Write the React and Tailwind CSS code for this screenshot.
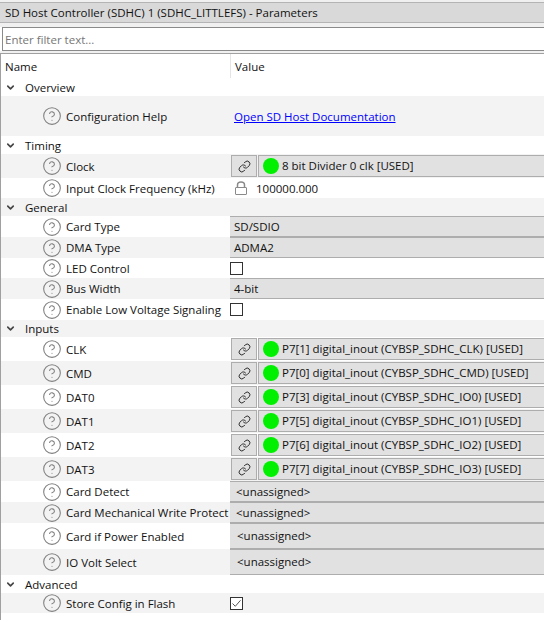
import React from "react";
import { ChevronDown, CircleHelp, Link } from "lucide-react";

const font = "font-['Open_Sans','Noto_Sans',sans-serif]";

function Lock() {
  return (
    <svg width="14" height="15" viewBox="0 0 14 15" fill="none" stroke="#8a8a8a" strokeWidth="1" className="shrink-0">
      <rect x="1.5" y="6.5" width="11" height="7" rx="0.5" />
      <path d="M3.5 6.5V4a3.5 3 0 0 1 7 0v2.5" strokeWidth="1.5" />
    </svg>
  );
}

function Check({ checked }) {
  return (
    <div className="flex h-[13px] w-[13px] items-center justify-center border border-[#333] bg-white">
      {checked && (
        <svg width="11" height="11" viewBox="0 0 11 11" fill="none" stroke="#555" strokeWidth="1">
          <path d="M1.5 5.5l2.8 2.8 5.2-6" />
        </svg>
      )}
    </div>
  );
}

function Group({ title, h, shade }) {
  return (
    <div className={`flex items-center pl-[4px] text-[11.5px] text-[#111] ${shade ? "bg-[#f3f3f3]" : "bg-white"} ${h}`}>
      <ChevronDown size={11} strokeWidth={3.5} className="text-[#444]" />
      <span className="ml-[9px] pt-[1px]">{title}</span>
    </div>
  );
}

function Row({ name, h, shade, children }) {
  return (
    <div className={`flex items-center ${shade ? "bg-[#f3f3f3]" : "bg-white"} ${h}`}>
      <div className="flex w-[229px] shrink-0 items-center pl-[41px]">
        <CircleHelp size={20} strokeWidth={1.3} className="shrink-0 text-[#808080]" />
        <span className="ml-[4px] whitespace-nowrap pt-[1px] text-[11.5px] text-[#111]">{name}</span>
      </div>
      <div className="flex h-full min-w-0 flex-1 items-center">{children}</div>
    </div>
  );
}

function Combo({ text, pad = "pl-[4px]" }) {
  return (
    <div className={`flex h-full flex-1 items-center whitespace-nowrap border-y border-[#adadad] bg-[#e1e1e1] text-[11.5px] text-[#111] ${pad}`}>
      {text}
    </div>
  );
}

function Pin({ text }) {
  return (
    <div className="flex h-full flex-1 items-stretch py-[1px] pl-[1px]">
      <div className="flex w-[26px] shrink-0 items-center justify-center border border-[#adadad] bg-[#e1e1e1]">
        <Link size={13} strokeWidth={1.6} className="text-[#111]" />
      </div>
      <div className="ml-[1px] flex flex-1 items-center whitespace-nowrap border-y border-l border-[#adadad] bg-[#e1e1e1] text-[11.5px] text-[#111]">
        <span className="ml-[4px] mr-[3px] h-[16px] w-[16px] shrink-0 rounded-full bg-[#00f000]" />
        <span>{text}</span>
      </div>
    </div>
  );
}

export default function App() {
  return (
    <div className={`h-[621px] w-[544px] overflow-hidden bg-white ${font}`}>
      <div className="h-[2px] bg-[#f0f0f0]" />
      <div className="flex h-[21px] items-center border-y border-[#b4b4b4] bg-[#d9d9d9] pl-[5px] text-[11.5px] text-[#111]">
        SD Host Controller (SDHC) 1 (SDHC_LITTLEFS) - Parameters
      </div>
      <div className="h-[4px] bg-[#f0f0f0]" />
      <div className="ml-[2px] flex h-[24px] items-center border border-r-0 border-[#8a8a8a] bg-white pl-[2px] pt-[2px] text-[11.5px] text-[#767676]">
        Enter filter text...
      </div>
      <div className="h-[2px] bg-[#f0f0f0]" />
      <div className="h-[567px] border-l border-t border-[#a0a0a0]">
        <div className="flex h-[24px] items-center text-[11.5px] text-[#111]">
          <span className="w-[229px] pl-[4px] pt-[2px]">Name</span>
          <span className="flex h-full items-center border-l border-[#e5e5e5] pl-[4px] pt-[2px]">Value</span>
        </div>
        <Group title="Overview" h="h-[18px]" />
        <Row name="Configuration Help" h="h-[40px]" shade>
          <span className="ml-[4px] pt-[1px] text-[11.5px] text-[#0000ff] underline">Open SD Host Documentation</span>
        </Row>
        <Group title="Timing" h="h-[18px]" />
        <Row name="Clock" h="h-[24px]" shade>
          <Pin text="8 bit Divider 0 clk [USED]" />
        </Row>
        <Row name="Input Clock Frequency (kHz)" h="h-[20px]">
          <span className="ml-[4px]"><Lock /></span>
          <span className="ml-[8px] pt-[1px] text-[11.5px] text-[#111]">100000.000</span>
        </Row>
        <Group title="General" h="h-[18px]" shade />
        <Row name="Card Type" h="h-[21px]"><Combo text="SD/SDIO" /></Row>
        <Row name="DMA Type" h="h-[21px]" shade><Combo text="ADMA2" /></Row>
        <Row name="LED Control" h="h-[20px]"><Check /></Row>
        <Row name="Bus Width" h="h-[21px]" shade><Combo text="4-bit" /></Row>
        <Row name="Enable Low Voltage Signaling" h="h-[21px]"><Check /></Row>
        <Group title="Inputs" h="h-[17px]" shade />
        <Row name="CLK" h="h-[24px]"><Pin text="P7[1] digital_inout (CYBSP_SDHC_CLK) [USED]" /></Row>
        <Row name="CMD" h="h-[24px]" shade><Pin text="P7[0] digital_inout (CYBSP_SDHC_CMD) [USED]" /></Row>
        <Row name="DAT0" h="h-[24px]"><Pin text="P7[3] digital_inout (CYBSP_SDHC_IO0) [USED]" /></Row>
        <Row name="DAT1" h="h-[24px]" shade><Pin text="P7[5] digital_inout (CYBSP_SDHC_IO1) [USED]" /></Row>
        <Row name="DAT2" h="h-[24px]"><Pin text="P7[6] digital_inout (CYBSP_SDHC_IO2) [USED]" /></Row>
        <Row name="DAT3" h="h-[24px]" shade><Pin text="P7[7] digital_inout (CYBSP_SDHC_IO3) [USED]" /></Row>
        <Row name="Card Detect" h="h-[21px]"><Combo text="<unassigned>" pad="pl-[6px]" /></Row>
        <Row name="Card Mechanical Write Protect" h="h-[21px]" shade><Combo text="<unassigned>" pad="pl-[6px]" /></Row>
        <Row name="Card if Power Enabled" h="h-[26px]"><Combo text="<unassigned>" pad="pl-[7px]" /></Row>
        <Row name="IO Volt Select" h="h-[26px]" shade><Combo text="<unassigned>" pad="pl-[7px]" /></Row>
        <Group title="Advanced" h="h-[18px]" />
        <Row name="Store Config in Flash" h="h-[20px]" shade><Check checked /></Row>
      </div>
    </div>
  );
}
